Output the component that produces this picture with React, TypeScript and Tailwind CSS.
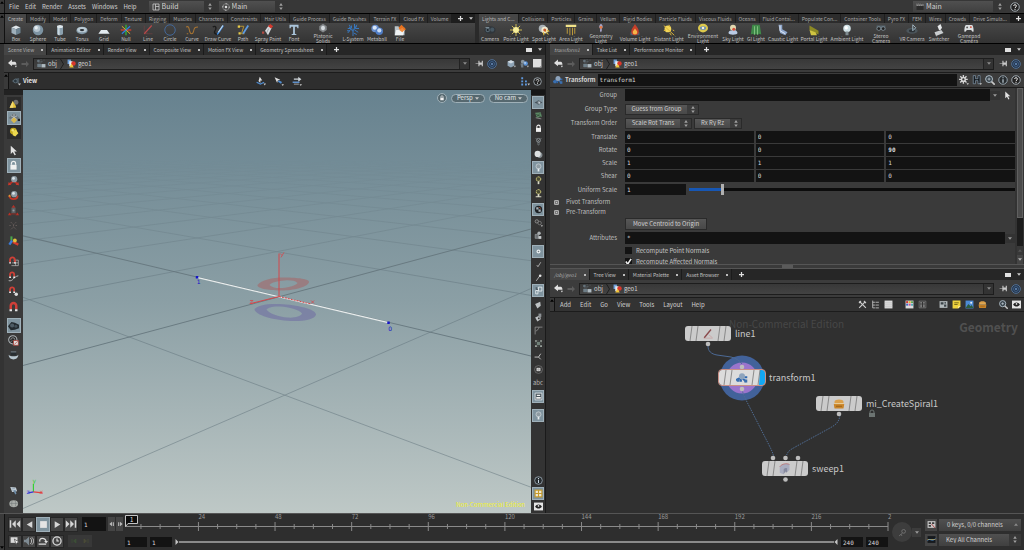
import type { ReactNode } from "react"

const ICONS: Record<string, ReactNode> = {
    box: (
        <>
            <path d="M2 4.5 8 2l6 2.5L8 7z" fill="#dfe6ea" />
            <path d="M2 4.5 8 7v7.5L2 12z" fill="#9fb0bb" />
            <path d="M14 4.5 8 7v7.5l6-2.5z" fill="#6d8391" />
        </>
    ),
    sphere: (
        <>
            <circle cx="8" cy="8" r="7" fill="#7d93a2" />
            <circle cx="6.5" cy="6" r="4.500" fill="#b3c2cc" />
            <circle cx="5.6" cy="5" r="2.200" fill="#e6edf1" />
        </>
    ),
    tube: (
        <>
            <path d="M4 3.5v9.5c0 1 1.8 2 4 2s4-1 4-2V3.5z" fill="#8ba0ae" />
            <path d="M5 4v10.200q1.500.8 2.500.8V4z" fill="#c8d5dd" />
            <ellipse cx="8" cy="3.200" rx="4" ry="2" fill="#dfe8ee" />
        </>
    ),
    torus: (
        <>
            <ellipse cx="8" cy="8.500" rx="7.500" ry="5" fill="#8297a5" />
            <ellipse cx="8" cy="7.500" rx="6.500" ry="3.500" fill="#bccbd5" />
            <ellipse cx="8" cy="8" rx="3" ry="1.500" fill="#2c3135" />
        </>
    ),
    grid: <path d="M4 8h8l3.500 5H.5z" fill="#e3eaef" />,
    null: (
        <>
            <path d="M8 1v14" stroke="#2fbf3a" strokeWidth="1.600" />
            <path d="M1 8h14" stroke="#e8402c" strokeWidth="1.600" />
            <path d="M2.500 3 13.500 13" stroke="#e3b52a" strokeWidth="1.300" />
            <path d="M13.500 3 2.500 13" stroke="#2f7fe0" strokeWidth="1.600" />
        </>
    ),
    line: (
        <>
            <path d="M3 2v11h11M3 13l5-1" fill="none" stroke="#6a4040" />
            <path d="M3 13 13 2" stroke="#b8494a" strokeWidth="1.500" />
        </>
    ),
    lineNode: (
        <>
            <path d="M2 13.500h12M9 9l5 4" fill="none" stroke="#c9a3a3" />
            <path d="M3 13 12 2" stroke="#8a4a4c" strokeWidth="1.800" />
        </>
    ),
    circle: <circle cx="8" cy="8" r="7" fill="none" stroke="#44699a" strokeWidth="1.300" />,
    curve: (
        <path
            d="M0 4c4-2 4 2 5 6s4 4 5 0 1-6 6-6M1 13h2"
            fill="none"
            stroke="#a87432"
            strokeWidth="1.400"
        />
    ),
    drawCurve: (
        <>
            <path d="M1 4c5-3 5 2 3 5s1 6 6 4" fill="none" stroke="#1c1c1c" strokeWidth="1.800" />
            <path d="M7 14 15 2" stroke="#3f8be0" strokeWidth="2" />
            <path d="M8.500 11 14.500 2" stroke="#c9dae6" strokeWidth="1.500" />
        </>
    ),
    path: (
        <>
            <path d="M2 3h7L6 13h4" fill="none" stroke="#b99430" strokeWidth="1.300" />
            <path d="M8 13 15 2" stroke="#5f9be0" strokeWidth="2.400" />
            <path d="M1 2h3v3H1zM2 11h3v3H2z" fill="#e8cc4a" />
        </>
    ),
    spray: (
        <>
            <path d="M4 9 9 2l4 3-5 10z" fill="#d8dcdf" />
            <path d="m8 3 3-3 4 3-3 3z" fill="#d2382d" />
            <path d="M0 10h3v3H0z" fill="#b14a42" />
            <path d="M6 12l3-6" stroke="#8d9498" />
        </>
    ),
    font: (
        <path
            d="M2 1h12v4.500h-1.500L12 3.500H9.200v9.500l2 .5v1H4.800v-1l2-.5V3.500H4l-.5 2H2z"
            fill="#aac4da"
        />
    ),
    platonic: (
        <>
            <path d="M8 1l6 4v6l-6 4-6-4V5z" fill="#83878a" />
            <path d="M8 4l3 2v4l-3 2-3-2V6z" fill="#d5dade" />
        </>
    ),
    lsystem: (
        <path
            d="M8 16V6M8 10 3 4M8 9l5-6M5 6H1M4 9H0M11 6h5M10 8l5 3M6 2v4M10 0v6M5 7 1 12M9 12l4 2M3 1l2 4M13 1l-2 4"
            fill="none"
            stroke="#3878c0"
            strokeWidth="1.300"
        />
    ),
    metaball: (
        <>
            <circle cx="5.500" cy="6" r="5" fill="#6a8fcc" />
            <circle cx="11" cy="9.500" r="5" fill="#4f7cc4" />
            <circle cx="5" cy="5" r="2.800" fill="#d9e6f6" />
            <circle cx="11" cy="8.500" r="2.800" fill="#c9dbf3" />
        </>
    ),
    file: (
        <>
            <path d="M1 3h5l1 2h7v10H1z" fill="#b9c3c9" />
            <path d="M6 5l4-4 6 6-6 4z" fill="#e6711f" />
            <path d="M3 8h11l-2 7H1z" fill="#eef2f4" />
            <path d="M7 8l4-3 3 3-3 3z" fill="#ef8a3c" />
        </>
    ),
    camera: (
        <>
            <ellipse cx="8" cy="8" rx="7.500" ry="5" fill="#30363b" />
            <circle cx="5" cy="8" r="3" fill="#53636e" />
            <circle cx="11" cy="7.500" r="2.800" fill="#465661" />
            <circle cx="5" cy="8" r="1.300" fill="#1c2227" />
            <path d="M2 4h5v1.500H2z" fill="#7b8b95" />
        </>
    ),
    pointLight: (
        <>
            <path
                d="M8 0v16M0 8h16M2.500 2.500l11 11M13.500 2.500l-11 11"
                stroke="#e6cf55"
                strokeWidth="1.100"
            />
            <circle cx="8" cy="8" r="4" fill="#f8ef9a" />
        </>
    ),
    spotLight: (
        <>
            <circle cx="6" cy="6" r="5" fill="#a9b1b6" />
            <circle cx="9" cy="8" r="4.500" fill="#efe9cf" />
            <path d="M9 9l5 5M12 8l3 2M7 11l1 4" stroke="#e0bd3c" strokeWidth="1.400" />
            <circle cx="9" cy="8" r="2" fill="#c85a2c" />
        </>
    ),
    areaLight: (
        <>
            <path d="M1 1h14v3H1z" fill="#f1e38a" />
            <path d="M3 5v8M6.500 5v10M10 5v10M13 5v8" stroke="#c8a33a" strokeWidth="1.200" />
        </>
    ),
    geoLight: (
        <>
            <path d="M8 1c4 3 3 6 1 8 1 2 0 4-1 6-2-2-2-4-1-6-3-2-2-6 1-8z" fill="#a7a4c8" />
            <circle cx="8" cy="7" r="2.200" fill="#e57a44" />
        </>
    ),
    volumeLight: (
        <>
            <path d="M2 11h12v4H2z" fill="#4b6275" />
            <path d="M8 0c1 3 5 5 5 10a5 5 0 0 1-10 0c0-4 3-6 5-10z" fill="#c7402b" />
            <path d="M8 6c1 2 3 3 3 5a3 3 0 0 1-6 0c0-2 2-3 3-5z" fill="#f5b54a" />
        </>
    ),
    distantLight: (
        <>
            <circle cx="6.500" cy="6.500" r="4.500" fill="#f2d65a" />
            <path d="M1 2l14 13M8 1l1 3M1 9l3-1M9 12l2 3M13 8l2 1" stroke="#d9b438" strokeWidth="1.300" />
        </>
    ),
    envLight: (
        <>
            <ellipse cx="8" cy="8" rx="8" ry="7" fill="#ddca4c" />
            <ellipse cx="8" cy="8" rx="5" ry="3" fill="#6d8fb6" />
            <circle cx="8" cy="8" r="2" fill="#f6f2d4" />
        </>
    ),
    skyLight: (
        <>
            <circle cx="8" cy="5" r="4" fill="#e3d9b0" />
            <path d="M2 12c0-3 3-4 4-3 2-3 8-1 8 3 0 3-12 3-12 0z" fill="#b9cbe4" />
            <circle cx="9" cy="7" r="2" fill="#d5503a" />
        </>
    ),
    giLight: (
        <>
            <path d="M3 1h10l2 13-3-1-2 2-2-2-2 2-2-2-3 1z" fill="#3f8a49" />
            <path d="M6 3v11M10 3v11" stroke="#7fbf80" strokeWidth="1.300" />
        </>
    ),
    caustic: (
        <>
            <path d="M2 1h5v6l7 4-3 4-7-3z" fill="#8ea6ca" />
            <path d="M4 2v7l7 4" fill="none" stroke="#e3ebf7" strokeWidth="1.300" />
        </>
    ),
    portal: (
        <>
            <path d="M2 2l12 7v5L2 8z" fill="#8d8a24" />
            <path d="M2 8l8 3 2 4H4z" fill="#cfc441" />
        </>
    ),
    bulb: (
        <>
            <circle cx="8" cy="6" r="5" fill="#cfe0e4" />
            <circle cx="7" cy="5" r="2.300" fill="#fff" />
            <path d="M6 10h4v5H6z" fill="#7f8c91" />
        </>
    ),
    stereo: (
        <>
            <path d="M1 4h14v7H1z" fill="#56646d" />
            <circle cx="4.500" cy="9" r="3" fill="#222" stroke="#97a6b0" />
            <circle cx="11.500" cy="9" r="3" fill="#222" stroke="#97a6b0" />
        </>
    ),
    vr: (
        <>
            <ellipse cx="8" cy="9" rx="7.500" ry="4" fill="#4c565c" />
            <ellipse cx="8" cy="9" rx="4" ry="2" fill="#2b3135" />
            <path d="M9 1v8l4-4z" stroke="#9fb4c0" fill="none" strokeWidth="1.300" />
        </>
    ),
    switcher: (
        <>
            <path d="M2 11l9-3 3 4-10 4z" fill="#c9cdcf" />
            <path d="M8 8 6 3l4-3 2 5-2 3" fill="#e6e8e9" />
        </>
    ),
    gamepad: (
        <>
            <path d="M3 3h10c2 1 3 10 2 11s-3-3-4-3H5c-1 0-3 4-4 3S1 4 3 3z" fill="#dcdfe1" />
            <circle cx="5" cy="7" r="1.500" fill="#555" />
            <circle cx="11" cy="6.500" r="1.500" fill="#d2452e" />
        </>
    ),
    back: (
        <>
            <path d="M0 7l7-6v4h4c4 0 4 4 4 5H7v3z" fill="#e0e0e0" />
            <path d="M12 12h4l-2 3z" fill="#e0e0e0" />
        </>
    ),
    forward: <path d="M16 8 10 2v4H1v4h9v4z" fill="#5c5c5c" />,
    obj: (
        <>
            <path d="M1 2h3v3H1zM6 4h4M1 9h6v5H1z" fill="#6f7e88" stroke="#6f7e88" />
            <path d="M8 9h7v6H8z" fill="#aebac1" />
            <path d="M2 6h8M11 2h3M5 1h3" stroke="#66737c" strokeDasharray="1 1" />
        </>
    ),
    geo: (
        <>
            <path d="M1 1h6v8H1z" fill="#6f9fd8" />
            <path d="M4 4h6v9H4z" fill="#e8edf2" />
            <circle cx="11.500" cy="8" r="4" fill="#d9372c" />
            <path d="M4 15 8 8l4 7z" fill="#f0c33a" />
        </>
    ),
    pin: <path d="M1 7.500h5V3h2v3h4V3h2v10h-2v-3H8v3H6V8.500H1z" fill="#c9c9c9" />,
    target: (
        <>
            <circle cx="8" cy="8" r="7" fill="#26364a" stroke="#587aa4" strokeWidth="1.300" />
            <circle cx="8" cy="8" r="4" fill="none" stroke="#45699a" strokeWidth="1.200" />
            <circle cx="8" cy="8" r="1.500" fill="#6f97c8" />
        </>
    ),
    cube: (
        <>
            <path d="M1 5 7 2l6 3v7l-6 3-6-3z" fill="#8fa4b6" />
            <path d="M1 5l6 3 6-3-6-3z" fill="#d3dce4" />
            <path d="M12 12h4l-2 3z" fill="#bbb" />
        </>
    ),
    people: (
        <>
            <circle cx="5" cy="5" r="3.500" fill="#8a949b" />
            <circle cx="10" cy="8" r="4" fill="#5d93d6" />
            <path d="M1 8h5v7H2z" fill="#717c84" />
            <circle cx="9" cy="7" r="1.500" fill="#c9dcf2" />
            <path d="M12 12h4l-2 3z" fill="#bbb" />
        </>
    ),
    square: (
        <>
            <path d="M0 0h15v15H0z" fill="#dedede" />
            <path d="M12 13h4l-2 3z" fill="#888" />
        </>
    ),
    viewCam: (
        <>
            <path d="M1 8l5-3v6zM7 4l6-1v9l-6-1z" fill="#4a565e" />
            <circle cx="7" cy="8" r="3" fill="#2b363e" stroke="#6c7d88" />
            <path d="M11 12h5l-2.500 3z" fill="#ccc" />
        </>
    ),
    pickA: (
        <>
            <path d="M6 1l4 6H7v4L4 8z" fill="#dedede" />
            <path d="M1 10l6 3 6-3" fill="none" stroke="#4e8bd0" strokeWidth="2" />
            <path d="M12 12h4l-2 3z" fill="#ccc" />
        </>
    ),
    pickB: (
        <>
            <path d="M1 2l9 4-4 1-1 4z" fill="#dedede" />
            <path d="M7 8l5 3" stroke="#4e8bd0" strokeWidth="3" />
            <path d="M12 13h4l-2 3z" fill="#ccc" />
        </>
    ),
    pickC: (
        <>
            <path d="M3 4h7V1l5 4-5 4V6H3z" fill="#cdd3d8" />
            <path d="M1 10h11" stroke="#5e8fc9" strokeWidth="2.400" />
            <path d="M3 13h8" stroke="#aaa" strokeWidth="1.500" />
            <path d="M12 13h4l-2 3z" fill="#ccc" />
        </>
    ),
    layout: (
        <>
            <path d="M2 2h3v3H2zM2 7h3v3H2zM2 12h3v3H2zM8 7h3v3H8zM8 12h3v3H8z" fill="#5e97dc" />
            <path d="M12 12h4l-2 3z" fill="#ccc" />
        </>
    ),
    help: (
        <>
            <circle cx="8" cy="8" r="6.800" fill="#222" stroke="#b9c4cc" strokeWidth="1.300" />
            <path
                d="M5.800 6.300C5.800 3.500 10.300 3.700 10.300 6.300 10.300 8 8 8 8 9.800M8 11v1.700"
                fill="none"
                stroke="#e8e8e8"
                strokeWidth="1.600"
            />
        </>
    ),
    info: (
        <>
            <circle cx="8" cy="8" r="6.800" fill="#262b2e" stroke="#a9b8c4" strokeWidth="1.300" />
            <path d="M8 3.500v1.700M8 6.800v5.700" stroke="#c9d6e0" strokeWidth="1.800" />
        </>
    ),
    gear: (
        <>
            <path d="M7 0v14M0 7h14M2 2l10 10M12 2 2 12" stroke="#d6d6d6" strokeWidth="2.200" />
            <circle cx="7" cy="7" r="4" fill="#d6d6d6" />
            <circle cx="7" cy="7" r="1.800" fill="#333" />
            <path d="M12 13h4l-2 3z" fill="#ccc" />
        </>
    ),
    hscript: (
        <>
            <path d="M2 1h3.500v5h4V1H13v13H9.500V9h-4v5H2z" fill="#151a1e" stroke="#8fa6bd" />
            <path d="M12 13h4l-2 3z" fill="#ccc" />
        </>
    ),
    zoom: (
        <>
            <circle cx="6.500" cy="6.500" r="5.500" fill="#37424a" stroke="#b4c2cc" strokeWidth="1.600" />
            <path d="M10.500 10.500l5 5" stroke="#c9c9c9" strokeWidth="2.600" />
            <path d="M4 6.500h5M6.500 4v5" stroke="#dbe6ee" />
        </>
    ),
    arrow: <path d="M4 1v12l3-3 2.500 5 2-1L9 9.500h4z" fill="#e2e2e2" />,
    objMode: (
        <>
            <circle cx="11" cy="5" r="4" fill="#6e6e6e" />
            <path d="M1 14 6 3l5 8v3z" fill="#e6c53a" />
            <path d="M1 14 6 3l1 11z" fill="#f2da74" />
        </>
    ),
    compMode: (
        <>
            <path d="M8 1l7 7-7 4-7-4z" fill="#6c757a" />
            <path d="M8 2v9M4 5l8 5M12 5l-8 5" stroke="#c5ccd0" />
            <path d="M8 7l4 4-4 4-4-4z" fill="#d8b84c" />
            <path d="M13 9h3v3h-3z" fill="#222" />
        </>
    ),
    dynMode: (
        <>
            <circle cx="7" cy="6.500" r="5.500" fill="#c4aa1e" />
            <path d="M6 7l5-3 4 6-5 5-4-2z" fill="#ecd94f" />
            <circle cx="6" cy="5" r="2" fill="#f0e27c" />
        </>
    ),
    lock: (
        <>
            <path d="M5 7V5a3 3 0 0 1 6 0v2" fill="none" stroke="#f0f0f0" strokeWidth="1.800" />
            <path d="M3.500 7h9v7h-9z" fill="#f0f0f0" />
        </>
    ),
    move: (
        <>
            <path d="M8 9 2 13M9 9l5 4" stroke="#b93126" strokeWidth="2.600" fill="none" />
            <path d="M0 15l1-5 4 4zM16 15l-5-1 4-4z" fill="#c9382b" />
            <circle cx="9" cy="6" r="4.500" fill="#8d9ba4" />
            <circle cx="8" cy="5" r="2" fill="#dbe3e8" />
        </>
    ),
    rotate: (
        <>
            <path d="M2 8c0 7 12 7 12 0" stroke="#c23527" strokeWidth="2.600" fill="none" />
            <circle cx="9" cy="6" r="4.500" fill="#8d9ba4" />
            <circle cx="8" cy="5" r="2" fill="#dbe3e8" />
            <path d="M0 9l3-3 1 4z" fill="#dc9c36" />
        </>
    ),
    scaleTool: (
        <>
            <path d="M8 0l3 4H5zM0 15l2-4 3 4zM16 15l-2-4-3 4z" fill="#b93126" />
            <path d="M5 4h6v8H5z" fill="#5c6164" />
            <path d="M3 13h10" stroke="#8b3028" strokeWidth="1.500" />
            <circle cx="8" cy="8" r="1.500" fill="#92999d" />
        </>
    ),
    pose: (
        <path d="M4 3l4 4 4-4M8 7v3l-4 4M8 10l4 4M2 8h3M11 8h3" stroke="#6a605d" strokeWidth="1.300" strokeDasharray="2 1" fill="none" />
    ),
    handles: (
        <>
            <path d="M5 8V2" stroke="#4aa84a" strokeWidth="3" />
            <path d="M6 8l-4 6" stroke="#3c7bd6" strokeWidth="3.400" />
            <path d="M7 10l8 4" stroke="#d33a2d" strokeWidth="3.400" />
            <circle cx="10" cy="8" r="2.800" fill="#e2c13c" />
        </>
    ),
    magnetGrid: (
        <>
            <path d="M8 6h7v8H5M6 10h9M11 6v8" stroke="#bdbdbd" fill="none" />
            <path d="M3 9V5.500a3.500 3.500 0 0 1 7 0V9" stroke="#cf4037" strokeWidth="2.600" fill="none" />
            <path d="M1.700 9h2.600v2H1.700zM8.700 9h2.600v2H8.700z" fill="#eee" />
        </>
    ),
    magnetCurve: (
        <>
            <path d="M1 14c6 2 7-6 14-7" stroke="#bdbdbd" strokeWidth="1.300" fill="none" />
            <path d="M3 8V5a3 3 0 0 1 6 0v3" stroke="#cf4037" strokeWidth="2.600" fill="none" />
            <path d="M1.700 8h2.600v2H1.700zM7.700 8h2.600v2H7.700z" fill="#eee" />
        </>
    ),
    magnetPoint: (
        <>
            <path d="M3 8V5a3 3 0 0 1 6 0v3" stroke="#cf4037" strokeWidth="2.600" fill="none" />
            <path d="M1.700 8h2.600v2H1.700zM7.700 8h2.600v2H7.700z" fill="#eee" />
            <circle cx="12" cy="12" r="2.500" fill="#ddd" />
        </>
    ),
    magnet: (
        <>
            <path d="M4 12V7a4 4 0 0 1 8 0v5" stroke="#cf3f38" strokeWidth="3.600" fill="none" />
            <path d="M2.200 12h3.600v3H2.200zM10.200 12h3.600v3h-3.600z" fill="#e6e6e6" />
        </>
    ),
    camDark: (
        <>
            <path d="M0 9l5-6 5 1 6 3v5l-6 2-6 1z" fill="#232a2f" />
            <circle cx="6" cy="8" r="3" fill="#4e5b64" />
            <circle cx="11.500" cy="9" r="2.200" fill="#414e57" />
        </>
    ),
    flip: (
        <>
            <circle cx="7" cy="7" r="6" fill="#2a2a2a" stroke="#aeb5b9" strokeWidth="1.500" />
            <path d="M4 7a3 3 0 0 1 6 0M4 10l2-2" stroke="#aeb5b9" fill="none" />
            <path d="M8 8h7v7H8z" fill="#ddd" stroke="#b03a30" />
            <path d="M9 14l5-5" stroke="#b03a30" />
        </>
    ),
    bowl: (
        <>
            <path d="M4 2h8v6H4z" fill="#272d31" />
            <path d="M4 2h8v1.500H4z" fill="#7b868d" />
            <path d="M1 7c0 9 14 9 14 0-2 3-12 3-14 0z" fill="#b7c6cf" />
        </>
    ),
    plane: (
        <>
            <path d="M8 4l7 4-7 4-7-4z" fill="#46525a" />
            <path d="M4.500 6l7 4M11.500 6l-7 4" stroke="#8c9aa2" />
            <path d="M8 5v6l4-2" fill="#c3cdd3" />
        </>
    ),
    planeGreen: (
        <>
            <path d="M2 3l10-1 2 8-9 2z" fill="#5b8763" />
            <path d="M4 6l8 4M5 10l6-6" stroke="#25382a" />
            <path d="M3 12l10 2" stroke="#bbb" />
        </>
    ),
    ghost: (
        <>
            <circle cx="8" cy="6" r="3.500" fill="none" stroke="#9aa2a6" strokeWidth="1.300" />
            <path d="M6 5l4 3M10 4 6 9M7 10h2v4H7zM3 2l2 2M13 2l-2 2" stroke="#9aa2a6" />
        </>
    ),
    spheres: (
        <>
            <circle cx="10" cy="9" r="5" fill="#868e92" />
            <circle cx="6.500" cy="7" r="5.500" fill="#dcdfe0" />
        </>
    ),
    bulbLight: (
        <>
            <circle cx="8" cy="6" r="4.500" fill="#8f9ca3" stroke="#dfe6e9" />
            <path d="M6.500 10h3v5h-3z" fill="#e8edef" />
        </>
    ),
    bulbYellow: (
        <>
            <circle cx="8" cy="5.500" r="4" fill="#4a4b32" stroke="#e3dd84" strokeWidth="1.600" strokeDasharray="3 1" />
            <path d="M6.500 9.500h3v5h-3z" fill="#d9d9c6" />
        </>
    ),
    bulbShadow: (
        <>
            <circle cx="8" cy="5" r="4" fill="#4a4b32" stroke="#e3dd84" strokeWidth="1.600" strokeDasharray="3 1" />
            <path d="M6.500 9h3v4h-3zM3 13h10v1.500H3z" fill="#d9d9c6" />
        </>
    ),
    checkBall: (
        <>
            <circle cx="8" cy="8" r="6.500" fill="#1d2226" />
            <path d="M4 4h4v4H4zM8 8h4v4H8z" fill="#a9b2b8" />
            <path d="M9 4l3 2" stroke="#c45b37" strokeWidth="1.500" />
        </>
    ),
    chain: (
        <>
            <circle cx="5" cy="6" r="3" fill="#3d3d3d" stroke="#9c9c9c" strokeWidth="1.300" />
            <circle cx="10" cy="9" r="3" fill="#2b2b2b" stroke="#8a8a8a" strokeWidth="1.300" />
            <path d="M12 13h4l-2 3z" fill="#bbb" />
        </>
    ),
    shapes: (
        <>
            <path d="M2 6h6v7H2z" fill="#6d7174" stroke="#a6abae" />
            <circle cx="9" cy="4" r="3" fill="#aaafb2" />
            <path d="M8 9h5v5H8z" fill="#c8ccce" />
        </>
    ),
    dot: (
        <>
            <circle cx="8" cy="8" r="3.500" fill="#e9eef0" />
            <circle cx="8" cy="8" r="1.400" fill="#6d7b82" />
        </>
    ),
    check: <path d="M5 9l2 3 5-8" stroke="#b8b8b8" strokeWidth="1.500" fill="none" />,
    brush: (
        <>
            <path d="M4 14l7-10" stroke="#b8b8b8" strokeWidth="1.600" />
            <circle cx="11" cy="5" r="2.300" fill="#e6e6e6" />
        </>
    ),
    notes: (
        <>
            <path d="M3 8h4v6H3zM8 2h6v7H8z" fill="none" stroke="#e8edf0" strokeWidth="1.500" />
            <path d="M4 2v4h3" stroke="#3b464c" strokeWidth="1.500" fill="none" />
        </>
    ),
    kite: <path d="M2 7l9-4 1 7-6 5z" fill="#bfc3c5" />,
    kiteBox: (
        <>
            <path d="M2 8l9-4 1 7-6 4z" fill="#bfc3c5" />
            <path d="M8 1h5v6H8z" fill="#8d9295" />
            <path d="M7 8h3v3H7z" fill="#333" />
        </>
    ),
    corner: <path d="M2 15V2h13M3 9c3-1 5-3 6-7" stroke="#9c9c9c" strokeWidth="1.300" fill="none" />,
    cluster: (
        <>
            <path d="M2 2h3v3H2zM11 2h3v3h-3zM2 11h3v3H2zM11 11h3v3h-3z" fill="#a6b0a9" />
            <path d="M5 5h6v6H5z" fill="#6f7f77" />
            <path d="M3 6v4M13 6v4M6 3h4M6 13h4" stroke="#7d8781" strokeDasharray="1 1" />
        </>
    ),
    tri: <path d="M1 9h7l4-6M8 9l4 4" stroke="#d4d4d4" strokeWidth="1.500" fill="none" />,
    tile: (
        <>
            <circle cx="8" cy="8" r="7" fill="none" stroke="#8a8a8a" />
            <path d="M4.500 5h7v6h-7z" fill="#d0d0d0" />
            <path d="M8 5v6M4.500 8h7" stroke="#999" strokeWidth=".7" />
        </>
    ),
    frame: (
        <>
            <path d="M2 2h12v12H2z" fill="#48545b" stroke="#e4eaed" strokeWidth="1.500" />
            <path d="M5 5h6v2H5zM4 9h8v3H4z" fill="#f0f0f0" />
        </>
    ),
    quad: (
        <>
            <path d="M1 1h14v14H1z" fill="#c79b2a" />
            <path d="M3 3h4v4H3zM9 3h4v4H9zM3 9h4v4H3zM9 9h4v4H9z" fill="#efe9d6" />
        </>
    ),
    eye: (
        <>
            <path d="M0 1h16v14H0z" fill="#e4e4e4" />
            <path d="M2 8c3-5 9-5 12 0-3 5-9 5-12 0z" fill="#222" />
            <circle cx="8" cy="7" r="1.500" fill="#e4e4e4" />
        </>
    ),
    dropper: (
        <>
            <path d="M2 3l9 1 2 6-8 1z" fill="#c7d2d9" />
            <path d="M4 5l6 1M5 8l6 1" stroke="#7f94a6" />
            <path d="M7 9l3 6 2-1-2-6z" fill="#6e8ca8" />
        </>
    ),
    globe: (
        <>
            <ellipse cx="7.500" cy="7.500" rx="7" ry="5.500" fill="#a9ada9" />
            <path d="M1 7h13M5 3c-1 3-1 6 0 9M10 3c1 3 1 6 0 9" stroke="#6b7070" fill="none" strokeWidth=".8" />
        </>
    ),
    transform: (
        <>
            <path d="M0 11l5-3M6 9l1 4M9 9l5 4M11 7h4" stroke="#2f68b0" strokeWidth="2.600" />
            <circle cx="8" cy="5.500" r="4" fill="#8ea4bd" />
            <path d="M1 9h4v4H1zM11 10h4v4h-4z" fill="#3b6fae" />
        </>
    ),
    tools: (
        <>
            <path d="M3 3l11 11" stroke="#cfcfcf" strokeWidth="2" />
            <path d="M13 3 2 14" stroke="#cfcfcf" strokeWidth="2" />
            <path d="M1 4l3-3 2 2-3 3zM11 1l4 4-2 1-3-3z" fill="#cfcfcf" />
        </>
    ),
    tree: <path d="M3 1v13h4M3 4h4M3 9h4M8 4h6M8 9h6M8 14h6" stroke="#c4c4c4" strokeWidth="1.500" fill="none" />,
    sheet: (
        <>
            <path d="M1 1h14v14H1z" fill="#dcdcdc" />
            <path d="M1 5h14M1 8.500h14M1 12h14" stroke="#b5b5b5" strokeWidth=".8" />
        </>
    ),
    palette: (
        <>
            <path d="M1 1h14v14H1z" fill="#ddd" />
            <path d="M2 2h3.500v3.500H2z" fill="#d0382c" />
            <path d="M6.500 2H10v3.500H6.500z" fill="#e2b62e" />
            <path d="M11 2h3v3.500h-3z" fill="#4b9a3f" />
            <path d="M2 6.500h3.500V10H2z" fill="#3a68c4" />
            <path d="M6.500 6.500H10V10H6.500z" fill="#c84f9a" />
            <path d="M11 6.500h3V10h-3z" fill="#3aa0b4" />
        </>
    ),
    dots: (
        <>
            <path d="M2 2h12v12H2z" fill="none" stroke="#8f8f8f" />
            <path d="M4 4h3v2H4zM9 4h3v2H9zM4 8h3v2H4zM9 8h3v2H9zM4 11h3v2H4zM9 11h3v2H9z" fill="#999" />
        </>
    ),
    checker: (
        <>
            <path d="M1 2h14v12H1z" fill="#b3babd" />
            <path d="M3 4h5v4H3zM9 8h4v4H9z" fill="#3a4247" />
            <circle cx="11" cy="5" r="1.500" fill="#3a4247" />
        </>
    ),
    sticky: (
        <>
            <path d="M1 1h14v10l-4 4H1z" fill="#efd33e" />
            <path d="M4 5h8M4 8h6" stroke="#54490f" strokeWidth="1.300" />
            <path d="M15 11l-4 4v-4z" fill="#fff3ae" />
        </>
    ),
    image: (
        <>
            <path d="M1 1h14v14H1z" fill="#4d8bd6" />
            <path d="M1 14l5-7 4 4 2-2 3 5z" fill="#2d5d3e" />
            <circle cx="11" cy="5" r="1.800" fill="#e9f0f6" />
        </>
    ),
    basket: (
        <>
            <path d="M2 5c0-4 12-4 12 0v2H2z" fill="#dba04a" />
            <path d="M1 8h14l-1 6H2z" fill="#c98428" />
            <path d="M2 7.500h12" stroke="#f7d38e" />
            <path d="M4 11h8" stroke="#8d5a17" />
        </>
    ),
    sweep: (
        <>
            <path d="M1 5c3-4 9-5 13-3v7l-3 3V7C8 6 6 7 6 9v6l-5-2z" fill="#a9adc0" />
            <path d="M6 9c0-2 2-3 5-2v5l-2 1v-2L6 15z" fill="#85899f" />
            <path d="M1 5c3-4 9-5 13-3" stroke="#b8686a" fill="none" />
        </>
    ),
    desktop: (
        <path d="M2 2h12v12H2zM7 2v12M7 7h7" fill="none" stroke="#c9c9c9" strokeWidth="1.600" />
    ),
    radial: (
        <>
            <circle cx="8" cy="8" r="6.500" fill="none" stroke="#b5b5b5" strokeWidth="1.300" strokeDasharray="7 3" />
            <circle cx="8" cy="8" r="2.500" fill="#e0e0e0" />
            <path d="M8 0v3M8 13v3M0 8h3M13 8h3" stroke="#e0e0e0" strokeWidth="1.500" />
        </>
    ),
    clapper: (
        <>
            <path d="M1 6h14v8H1z" fill="#2c2c2c" />
            <path d="M1 1l14 1v4H1z" fill="#8a8a8a" />
            <path d="M3 1l2 4M7 1l2 4M11 1l2 4" stroke="#222" />
        </>
    ),
    first: <path d="M1 3h2v10H1zM9 3v10L4 8zM15 3v10l-5-5z" fill="#d6d6d6" />,
    last: <path d="M13 3h2v10h-2zM7 3v10l5-5zM1 3v10l5-5z" fill="#d6d6d6" />,
    playBack: <path d="M13 2v12L3 8z" fill="#d6d6d6" />,
    play: <path d="M3 2v12l10-6z" fill="#d6d6d6" />,
    stop: <path d="M2 2h12v12H2z" fill="#e4e4e4" />,
    stepBack: <path d="M8 2v12L1 8zM10 3h3v10h-3z" fill="#b8b8b8" />,
    stepFwd: <path d="M8 2v12l7-6zM3 3h3v10H3z" fill="#b8b8b8" />,
    realtime: (
        <>
            <path d="M1 2h11v9H1z" fill="#d9d9d9" />
            <path d="M7 5l8 5-4 1-1 4z" fill="#f4f4f4" stroke="#333" />
        </>
    ),
    audio: (
        <>
            <path d="M0 6h3l5-5v14l-5-5H0z" fill="#7f8b93" />
            <path d="M10 3c3 3 3 7 0 10M12.500 2c4 4 4 8 0 12" stroke="#d4d4d4" fill="none" strokeWidth="1.300" />
        </>
    ),
    loop: (
        <>
            <path d="M3 9c-2-7 9-7 10 0M1 13h12" stroke="#dedede" strokeWidth="2" fill="none" />
            <path d="M10 8h6l-3 4z" fill="#dedede" />
        </>
    ),
    clock: (
        <>
            <circle cx="8" cy="8" r="6.500" fill="#444" stroke="#e0e0e0" strokeWidth="2" />
            <path d="M8 4v4h3" stroke="#e8e8e8" strokeWidth="1.700" fill="none" />
        </>
    ),
    prevKey: <path d="M4 4v8M12 4v8L7 8z" fill="#3f4a3a" stroke="#3b5a32" />,
    nextKey: <path d="M12 4v8M4 4v8l5-4z" fill="#4a453c" stroke="#4c5533" />,
    key: (
        <>
            <circle cx="10" cy="6" r="3.300" fill="none" stroke="#777" strokeWidth="1.500" />
            <path d="M8 9l-6 5M5 11l2 3" stroke="#777" strokeWidth="1.500" />
        </>
    ),
    scope: (
        <>
            <path d="M1 2h14v12H1z" fill="#c8c8c8" />
            <path d="M3 4h4v3H3zM9 4h4v3H9zM3 9h4v3H3z" fill="#3b3b3b" />
            <path d="M8 7l6 7" stroke="#a33" strokeWidth="1.500" />
        </>
    ),
    channels: (
        <>
            <path d="M1 2h14v12H1z" fill="#15191d" />
            <path d="M1 8h14" stroke="#d9a83a" strokeWidth="1.500" />
            <path d="M1 10c4-6 8 4 14-4" stroke="#4f9be0" fill="none" strokeWidth="1.300" />
        </>
    ),
    plusBox: (
        <>
            <path d="M1 1h14v14H1z" fill="#e2e2e2" />
            <path d="M4 4h8v8H4z" fill="#2a2a2a" />
            <path d="M8 5v6M5 8h6" stroke="#e2e2e2" strokeWidth="2" />
        </>
    ),
}

const Icon = ({ name, className = "size-3" }: { name: string; className?: string }) => (
    <svg viewBox="0 0 16 16" className={`shrink-0 ${className}`} aria-hidden="true">
        {ICONS[name]}
    </svg>
)

const IconButton = ({
    name,
    size = "size-[12px]",
    className = "",
}: {
    name: string
    size?: string
    className?: string
}) => (
    <button aria-label={name} className={`flex shrink-0 items-center justify-center ${className}`}>
        <Icon name={name} className={size} />
    </button>
)

const Down = ({ className = "fill-[#c8c8c8]" }: { className?: string }) => (
    <svg viewBox="0 0 6 4" className={`h-[3px] w-[4px] shrink-0 ${className}`} aria-hidden="true">
        <path d="M0 0h6L3 4z" />
    </svg>
)

const UpDown = () => (
    <svg viewBox="0 0 4 8" className="h-[7px] w-[4px] shrink-0 fill-[#a0a0a0]" aria-hidden="true">
        <path d="M0 3h4L2 0zM0 5h4L2 8z" />
    </svg>
)

const Plus = () => (
    <svg viewBox="0 0 6 6" className="size-[5px] shrink-0" aria-hidden="true">
        <path d="M3 0v6M0 3h6" stroke="#e0e0e0" strokeWidth="1.500" />
    </svg>
)

const Handle = ({ down = false }: { down?: boolean }) => (
    <button
        aria-label="Collapse"
        className={`flex w-[5px] shrink-0 justify-center self-stretch border-r border-[#111] bg-[#3a3a3a] py-px ${
            down ? "items-end" : "items-start"
        }`}
    >
        <Down className={down ? "fill-black" : "rotate-180 fill-black"} />
    </button>
)

/* ---------- menu bar ---------- */

const MENUS = ["File", "Edit", "Render", "Assets", "Windows", "Help"]

const Desktop = ({ icon, label, width }: { icon: string; label: string; width: string }) => (
    <label className="flex h-[11px] items-center bg-linear-to-b from-[#505050] to-[#404040] text-[7px]">
        <span className={`flex items-center gap-0.5 pl-[3px] ${width}`}>
            <Icon name={icon} className="size-[8px]" />
            <select aria-label={label} className="grow appearance-none bg-transparent outline-none">
                <option>{label}</option>
            </select>
        </span>
        <span className="flex h-full w-[13px] items-center justify-center bg-[#363636]">
            <UpDown />
        </span>
    </label>
)

const MenuBar = () => (
    <header className="flex h-[14px] shrink-0 items-center border-b border-black bg-[#373737] pr-1">
        <Handle />
        <nav className="ml-1 flex gap-[6px] text-[6px] text-[#d0d0d0]">
            {MENUS.map((menu) => (
                <button key={menu}>{menu}</button>
            ))}
        </nav>
        <div className="ml-3 flex gap-0.5">
            <Desktop icon="desktop" label="Build" width="w-[55px]" />
            <Desktop icon="radial" label="Main" width="w-[56px]" />
        </div>
        <div className="ml-auto flex items-center gap-1">
            <Desktop icon="clapper" label="Main" width="w-[80px]" />
            <IconButton name="help" size="size-[10px]" />
        </div>
    </header>
)

/* ---------- shelves ---------- */

interface Tool {
    label: string
    icon: string
    width: string
    tall?: boolean
}

const LEFT_SHELF = [
    "Create", "Modify", "Model", "Polygon", "Deform", "Texture", "Rigging", "Muscles",
    "Characters", "Constraints", "Hair Utils", "Guide Process", "Guide Brushes",
    "Terrain FX", "Cloud FX", "Volume",
]

const RIGHT_SHELF = [
    "Lights and C...", "Collisions", "Particles", "Grains", "Vellum", "Rigid Bodies",
    "Particle Fluids", "Viscous Fluids", "Oceans", "Fluid Contai...", "Populate Con...",
    "Container Tools", "Pyro FX", "FEM", "Wires", "Crowds", "Drive Simula...",
]

const LEFT_TOOLS: Tool[] = [
    { label: "Box", icon: "box", width: "w-[22px]" },
    { label: "Sphere", icon: "sphere", width: "w-[22px]" },
    { label: "Tube", icon: "tube", width: "w-[22px]" },
    { label: "Torus", icon: "torus", width: "w-[22px]" },
    { label: "Grid", icon: "grid", width: "w-[22px]" },
    { label: "Null", icon: "null", width: "w-[22px]" },
    { label: "Line", icon: "line", width: "w-[22px]" },
    { label: "Circle", icon: "circle", width: "w-[22px]" },
    { label: "Curve", icon: "curve", width: "w-[22px]" },
    { label: "Draw Curve", icon: "drawCurve", width: "w-[30px]" },
    { label: "Path", icon: "path", width: "w-[20px]" },
    { label: "Spray Paint", icon: "spray", width: "w-[30px]" },
    { label: "Font", icon: "font", width: "w-[22px]" },
    { label: "Platonic Solids", icon: "platonic", width: "w-[36px]", tall: true },
    { label: "L-System", icon: "lsystem", width: "w-[24px]" },
    { label: "Metaball", icon: "metaball", width: "w-[24px]" },
    { label: "File", icon: "file", width: "w-[22px]" },
]

const RIGHT_TOOLS: Tool[] = [
    { label: "Camera", icon: "camera", width: "w-[22px]" },
    { label: "Point Light", icon: "pointLight", width: "w-[30px]" },
    { label: "Spot Light", icon: "spotLight", width: "w-[26px]" },
    { label: "Area Light", icon: "areaLight", width: "w-[28px]" },
    { label: "Geometry Light", icon: "geoLight", width: "w-[32px]", tall: true },
    { label: "Volume Light", icon: "volumeLight", width: "w-[36px]" },
    { label: "Distant Light", icon: "distantLight", width: "w-[32px]" },
    { label: "Environment Light", icon: "envLight", width: "w-[36px]", tall: true },
    { label: "Sky Light", icon: "skyLight", width: "w-[24px]" },
    { label: "GI Light", icon: "giLight", width: "w-[22px]" },
    { label: "Caustic Light", icon: "caustic", width: "w-[32px]" },
    { label: "Portal Light", icon: "portal", width: "w-[30px]" },
    { label: "Ambient Light", icon: "bulb", width: "w-[36px]" },
    { label: "Stereo Camera", icon: "stereo", width: "w-[32px]", tall: true },
    { label: "VR Camera", icon: "vr", width: "w-[30px]" },
    { label: "Switcher", icon: "switcher", width: "w-[24px]" },
    { label: "Gamepad Camera", icon: "gamepad", width: "w-[36px]", tall: true },
]

const Shelf = ({ tabs, tools }: { tabs: string[]; tools: Tool[] }) => (
    <section className="min-w-0 grow bg-[#1e1e1e]">
        <div className="flex h-[9px] items-stretch gap-px text-[5px] text-[#ababab]">
            {tabs.map((tab, i) => (
                <button
                    key={tab}
                    className={`shrink-0 px-[3px] leading-[9px] whitespace-nowrap ${
                        i === 0 ? "bg-[#464646] text-[#bdbdbd]" : "bg-[#2c2c2c]"
                    }`}
                >
                    {tab}
                </button>
            ))}
            <button aria-label="Add shelf" className="flex w-4 shrink-0 items-center justify-center">
                <Plus />
            </button>
            <button aria-label="Shelf menu" className="ml-auto flex items-center pr-1">
                <Down />
            </button>
        </div>
        <div className="flex h-[20px] bg-linear-to-b from-[#464646] to-[#333333]">
            {tools.map((tool) => (
                <button
                    key={tool.label}
                    className={`flex shrink-0 flex-col items-center text-[5px] text-[#c2c2c2] ${
                        tool.tall ? "" : "pt-px"
                    } ${tool.width}`}
                >
                    <Icon name={tool.icon} className={tool.tall ? "size-[10px]" : "size-[12px]"} />
                    <span className={tool.tall ? "px-1 leading-[5px]" : "leading-[6px] whitespace-nowrap"}>
                        {tool.label}
                    </span>
                </button>
            ))}
        </div>
    </section>
)

/* ---------- pane chrome ---------- */

const PaneTabs = ({ tabs, italicFirst = false }: { tabs: string[]; italicFirst?: boolean }) => (
    <div className="flex h-[11px] shrink-0 items-stretch bg-[#262626] text-[5px] text-[#c2c2c2]">
        {tabs.map((tab, i) => (
            <button
                key={tab}
                className={`flex shrink-0 items-center gap-[7px] border-r border-[#1b1b1b] pr-[3px] pl-1 whitespace-nowrap ${
                    i === 0 ? "bg-[#454545] text-[#b0b0b0]" : "bg-[#2c2c2c]"
                } ${i === 0 && italicFirst ? "italic" : ""}`}
            >
                {tab}
                <span className="size-[2px] bg-[#bdbdbd]" />
            </button>
        ))}
        <button aria-label="Add tab" className="flex w-5 items-center justify-center">
            <Plus />
        </button>
        <div className="ml-auto flex items-center gap-1.5 pr-[3px]">
            <button aria-label="Maximize" className="h-[4px] w-[6px] bg-[#e0e0e0]" />
            <button aria-label="Pane menu" className="flex items-center">
                <Down />
            </button>
        </div>
    </div>
)

const PathBar = ({ children }: { children?: ReactNode }) => (
    <div className="flex h-[18px] shrink-0 items-center border-b border-[#1c1c1c] bg-[#3c3c3c] pr-[3px] pl-[3px] text-[6px] text-[#d0d0d0]">
        <IconButton name="back" size="size-[9px]" className="w-[10px]" />
        <IconButton name="forward" size="size-[8px]" className="ml-[3px] w-[10px]" />
        <div className="ml-[3px] flex h-[12px] grow items-center border border-[#1d1d1d] bg-linear-to-b from-[#383838] to-[#434343] pl-[3px]">
            <Icon name="obj" className="size-[9px]" />
            <button className="ml-0.5">obj</button>
            <svg viewBox="0 0 4 10" className="mx-[3px] h-[10px] w-[4px]" aria-hidden="true">
                <path d="M.5 0l3 5-3 5" fill="none" stroke="#1e1e1e" />
            </svg>
            <Icon name="geo" className="size-[9px]" />
            <button className="ml-0.5">geo1</button>
            <button
                aria-label="Path history"
                className="ml-auto flex h-full w-[10px] items-center justify-center border-l border-[#222] bg-[#333]"
            >
                <Down className="fill-[#8a8a8a]" />
            </button>
        </div>
        <IconButton name="pin" size="size-[9px]" className="ml-[5px]" />
        <IconButton name="target" size="size-[10px]" className="ml-[3px]" />
        {children}
    </div>
)

/* ---------- scene view ---------- */

interface BarItem {
    icon: string
    on?: boolean
    gap?: string
}

const LEFT_BAR: BarItem[] = [
    { icon: "arrow", gap: "mt-1" },
    { icon: "lock", on: true },
    { icon: "move" },
    { icon: "rotate" },
    { icon: "scaleTool" },
    { icon: "pose" },
    { icon: "handles" },
    { icon: "magnetGrid", gap: "mt-1.5" },
    { icon: "magnetCurve" },
    { icon: "magnetPoint" },
    { icon: "magnet" },
    { icon: "camDark", on: true, gap: "mt-1" },
    { icon: "flip" },
    { icon: "bowl" },
]

const RIGHT_BAR: BarItem[] = [
    { icon: "plane", on: true, gap: "mt-px" },
    { icon: "planeGreen" },
    { icon: "lock" },
    { icon: "ghost" },
    { icon: "spheres" },
    { icon: "bulbLight", on: true },
    { icon: "bulbYellow" },
    { icon: "bulbShadow" },
    { icon: "checkBall", on: true, gap: "mt-[3px]" },
    { icon: "chain" },
    { icon: "shapes" },
    { icon: "dot", on: true, gap: "mt-[3px]" },
    { icon: "check" },
    { icon: "brush" },
    { icon: "notes", on: true },
    { icon: "kite", gap: "mt-px" },
    { icon: "kiteBox" },
    { icon: "corner" },
    { icon: "cluster" },
    { icon: "tri" },
    { icon: "tile" },
    { icon: "abc" },
    { icon: "frame", on: true, gap: "mt-px" },
    { icon: "bulbLight", on: true, gap: "mt-1.5" },
]

const LIT = "border border-[#9fb0b9] bg-[#7f939e]"

const GRID_STEPS = Array.from({ length: 24 }, (_, i) => i - 1).filter((k) => k !== 0)

const PILL =
    "flex h-[9px] items-center gap-0.5 rounded-full border border-[#9fb0b8] bg-[#56686f] px-[5px]"

const Viewport = () => (
    <div className="relative min-w-0 grow">
        <svg
            viewBox="0 0 508 422"
            preserveAspectRatio="xMidYMid slice"
            className="absolute inset-0 size-full"
            role="img"
            aria-label="Perspective view"
        >
            <defs>
                <linearGradient id="sky" x1="0" y1="0" x2="0" y2="1">
                    <stop offset="0" stopColor="#67828f" />
                    <stop offset=".5" stopColor="#8b9fa5" />
                    <stop offset="1" stopColor="#bec8c6" />
                </linearGradient>
                <linearGradient id="fade" x1="0" y1="0" x2="0" y2="1">
                    <stop offset=".16" stopColor="#000" />
                    <stop offset=".28" stopColor="#666" />
                    <stop offset=".48" stopColor="#fff" />
                </linearGradient>
                <mask id="haze" maskUnits="userSpaceOnUse" x="0" y="0" width="508" height="422">
                    <rect width="508" height="422" fill="url(#fade)" />
                </mask>
            </defs>
            <rect width="508" height="422" fill="url(#sky)" />
            <g mask="url(#haze)" stroke="#5f7179" strokeWidth=".8" opacity=".6">
                {GRID_STEPS.map((k) => (
                    <line key={`x${k}`} x1={-440} y1={42} x2={560} y2={42 + 1000 / (4.244 + 1.57 * k)} />
                ))}
                {GRID_STEPS.map((k) => (
                    <line key={`z${k}`} x1={868} y1={42} x2={-32} y2={42 + 900 / (3.73 + 1.42 * k)} />
                ))}
            </g>
            <g stroke="#66777e" strokeWidth="1" opacity=".9">
                <path d="M0 145.400 510 266M0 275 510 138" />
            </g>
            <path
                d="M234.500 194.500c4-5 14-7.500 27-7.500s25 1.500 24.500 4.500c-1 5-16 8.500-27 8.500s-25-1.500-24.500-5.500zm12 0c2 2.500 7 3.500 13 3 7-.5 13-2.500 15-5-2-2.500-8-3-13-2.500-7 .5-13 2-15 4.500z"
                fill="#9d7678"
                fillRule="evenodd"
                opacity=".8"
            />
            <path
                d="M231.500 219c2-4 12-6 25-5.500 18 1 36 5 36.500 10.500-1 5-13 7-25 6.500-19-1-35-6-36.500-11.500zm12 0c3 4 12 7.500 21 8 7 .5 13-1 14.500-4-3-4-13-6.500-22-7-7-.5-12 1-13.500 3z"
                fill="#787ca4"
                fillRule="evenodd"
                opacity=".8"
            />
            <path d="M174 187 365 232" stroke="#e8ecec" strokeWidth="1.200" />
            <path d="M256 206V163M256 206l-28 7" stroke="#d4484c" fill="none" />
            <path d="M256 206l32 7.500" stroke="#d4484c" strokeDasharray="2 1" />
            <path d="M257 163l2 2M261 162l-3 5M227 210h3l-3 3h3M288 210l3 3M291 210l-3 3" stroke="#d4484c" fill="none" strokeWidth=".8" />
            <path d="M173 185.500h2.500v2.500H173zM364 231h2.500v2.500H364z" fill="#1414c8" />
            <path d="M11 401v-8" stroke="#34d034" strokeWidth="1.200" />
            <path d="M11 401l9 1" stroke="#e04040" strokeWidth="1.200" />
            <path d="M11 401l-5 1" stroke="#3434d8" strokeWidth="1.200" />
            <g fontSize="6" fontFamily="DejaVu Sans, sans-serif">
                <text x="174" y="194" fill="#1414c8">1</text>
                <text x="365" y="240" fill="#1414c8">0</text>
                <text x="10" y="392" fill="#34d034">y</text>
                <text x="17" y="403" fill="#e04040">x</text>
                <text x="4" y="403" fill="#3434d8">z</text>
            </g>
        </svg>
        <div className="absolute top-[3px] right-[3px] flex items-center gap-1 text-[6px] text-[#e2e8ea]">
            <button
                aria-label="Lock camera"
                className="flex size-[10px] items-center justify-center rounded-full border border-[#9fb0b8] bg-[#56686f]"
            >
                <Icon name="lock" className="size-[6px]" />
            </button>
            <button className={PILL}>
                Persp <Down />
            </button>
            <button className={PILL}>
                No cam <Down />
            </button>
        </div>
        <p className="absolute right-[6px] bottom-[4px] text-[6px] leading-[8px] text-[#f2f230]">
            Non-Commercial Edition
        </p>
    </div>
)

const SceneView = () => (
    <section className="flex min-w-0 flex-col border-r border-[#1a1a1a] bg-[#333] pl-[4px]">
        <PaneTabs
            tabs={[
                "Scene View",
                "Animation Editor",
                "Render View",
                "Composite View",
                "Motion FX View",
                "Geometry Spreadsheet",
            ]}
        />
        <PathBar>
            <IconButton name="cube" size="size-[9px]" className="ml-2.5" />
            <IconButton name="people" size="size-[9px]" className="ml-1" />
            <IconButton name="square" size="size-[9px]" className="ml-1" />
        </PathBar>
        <div className="flex h-[17px] shrink-0 items-center border-b border-[#1c1c1c] bg-[#2e2e2e] pr-[3px] text-[6px]">
            <Handle />
            <IconButton name="viewCam" size="size-[10px]" className="ml-0.5" />
            <span className="ml-[2px] font-bold text-[#e2e2e2]">View</span>
            <div className="flex grow items-center justify-center gap-2">
                <IconButton name="pickA" size="size-[10px]" />
                <IconButton name="pickB" size="size-[10px]" />
                <IconButton name="pickC" size="size-[10px]" />
            </div>
            <IconButton name="layout" size="size-[10px]" />
            <IconButton name="help" size="size-[9px]" className="ml-[3px]" />
        </div>
        <div className="flex min-h-0 grow">
            <div className="flex w-[19px] shrink-0 flex-col items-center bg-[#3a3a3a]">
                <div className="mb-0.5 h-[5px] w-full bg-[#222]" />
                <IconButton name="objMode" size="size-[10px]" className="h-[14px] w-[14px] bg-[#2b2b2b]" />
                <IconButton name="compMode" className={`h-[14px] w-[14px] ${LIT}`} />
                <IconButton name="dynMode" size="size-[10px]" className="h-[14px] w-[14px] bg-[#2b2b2b]" />
                {LEFT_BAR.map((item) => (
                    <IconButton
                        key={item.icon}
                        name={item.icon}
                        size="size-[11px]"
                        className={`h-[15px] w-[14px] ${item.gap ?? ""} ${item.on ? LIT : ""}`}
                    />
                ))}
                <IconButton name="dropper" size="size-[10px]" className="mt-auto h-[14px]" />
                <IconButton name="globe" size="size-[10px]" className="mb-0.5 h-[14px]" />
            </div>
            <Viewport />
            <div className="flex w-[14px] shrink-0 flex-col items-center bg-[#333]">
                <div className="h-[5px] w-full bg-[#161616]" />
                {RIGHT_BAR.map((item, i) =>
                    item.icon === "abc" ? (
                        <button key={i} className="h-[13px] text-[6px] leading-[13px] text-[#b5b5b5]">
                            abc
                        </button>
                    ) : (
                        <IconButton
                            key={i}
                            name={item.icon}
                            size="size-[9px]"
                            className={`h-[13px] w-[12px] ${item.gap ?? ""} ${item.on ? LIT : ""}`}
                        />
                    ),
                )}
                <IconButton name="info" size="size-[9px]" className="mt-auto h-[13px]" />
                <IconButton name="quad" size="size-[9px]" className={`h-[13px] w-[12px] ${LIT}`} />
                <IconButton name="eye" size="size-[9px]" className="h-[13px]" />
            </div>
        </div>
    </section>
)

/* ---------- parameters ---------- */

const MONO = "bg-[#131313] px-0.5 font-['DejaVu_Sans_Mono',monospace] text-[6px] text-[#d8d8d8] outline-none"

const FIELD = `h-[12px] min-w-0 grow leading-[12px] ${MONO}`

const Row = ({
    label,
    htmlFor,
    height = "h-[13px]",
    children,
}: {
    label?: string
    htmlFor?: string
    height?: string
    children: ReactNode
}) => (
    <div className={`flex items-center ${height}`}>
        <label htmlFor={htmlFor} className="mr-2 w-[67px] shrink-0 text-right text-[#bebebe]">
            {label}
        </label>
        {children}
    </div>
)

const Dropdown = ({ label, value, width }: { label: string; value: string; width: string }) => (
    <span className="mr-0.5 flex h-[11px] items-center border border-[#2a2a2a] bg-linear-to-b from-[#575757] to-[#484848]">
        <select
            aria-label={label}
            className={`appearance-none bg-transparent text-center text-[#d0d0d0] outline-none ${width}`}
        >
            <option>{value}</option>
        </select>
        <span className="flex h-full w-[11px] items-center justify-center bg-[#3c3c3c]">
            <UpDown />
        </span>
    </span>
)

const VECTORS = [
    { label: "Translate", values: ["0", "0", "0"] },
    { label: "Rotate", values: ["0", "0", "90"] },
    { label: "Scale", values: ["1", "1", "1"] },
    { label: "Shear", values: ["0", "0", "0"] },
]

const Check = ({ id, label, checked }: { id: string; label: string; checked?: boolean }) => (
    <div className="ml-[75px] flex h-[11px] items-center">
        <span className="relative mr-1 size-[7px]">
            <input
                id={id}
                type="checkbox"
                defaultChecked={checked}
                className="peer absolute inset-0 appearance-none bg-[#131313]"
            />
            <svg
                viewBox="0 0 8 8"
                className="pointer-events-none absolute inset-0 hidden size-full peer-checked:block"
                aria-hidden="true"
            >
                <path d="M1 4l2 3 4-6" stroke="#f0f0f0" strokeWidth="1.800" fill="none" />
            </svg>
        </span>
        <label htmlFor={id} className="text-[#c4c4c4]">
            {label}
        </label>
    </div>
)

const Parameters = () => (
    <section className="flex h-[220px] shrink-0 flex-col">
        <PaneTabs italicFirst tabs={["transform1", "Take List", "Performance Monitor"]} />
        <PathBar />
        <div className="flex h-[15px] shrink-0 items-center gap-[2px] border-b border-[#1c1c1c] bg-[#3c3c3c] pr-[3px] pl-[3px]">
            <Icon name="transform" className="size-[10px]" />
            <span className="text-[6px] font-bold text-[#d8d8d8]">Transform</span>
            <input aria-label="Node name" defaultValue="transform1" className={FIELD} />
            <IconButton name="gear" size="size-[10px]" />
            <IconButton name="hscript" size="size-[10px]" className="ml-px" />
            <IconButton name="zoom" size="size-[10px]" className="ml-px" />
            <IconButton name="info" size="size-[10px]" className="ml-px" />
            <IconButton name="help" size="size-[10px]" className="ml-px" />
        </div>
        <div className="flex min-h-0 grow bg-[#3a3a3a] text-[6px]">
            <div className="min-w-0 grow overflow-hidden">
                <Row label="Group" htmlFor="group" height="h-[14px]">
                    <input id="group" className={FIELD} />
                    <button aria-label="Group list" className="flex h-[9px] w-[10px] items-center justify-center bg-[#333]">
                        <Down className="fill-[#9a9a9a]" />
                    </button>
                    <IconButton name="arrow" size="size-[9px]" className="mx-[3px]" />
                </Row>
                <Row label="Group Type" height="h-[14px]">
                    <Dropdown label="Group Type" value="Guess from Group" width="w-[61px]" />
                </Row>
                <Row label="Transform Order" height="h-[14px]">
                    <Dropdown label="Transform Order" value="Scale Rot Trans" width="w-[54px]" />
                    <Dropdown label="Rotate Order" value="Rx Ry Rz" width="w-[35px]" />
                </Row>
                {VECTORS.map(({ label, values }) => (
                    <Row key={label} label={label} htmlFor={label}>
                        <div className="flex min-w-0 grow gap-0.5">
                            {values.map((value, i) => (
                                <input
                                    key={i}
                                    id={i === 0 ? label : undefined}
                                    aria-label={`${label} ${"xyz"[i]}`}
                                    defaultValue={value}
                                    className={`${FIELD} w-0 ${value === "90" ? "font-bold" : ""}`}
                                />
                            ))}
                        </div>
                    </Row>
                ))}
                <Row label="Uniform Scale" htmlFor="uniform" height="h-[15px]">
                    <input id="uniform" defaultValue="1" className={`h-[11px] w-[61px] shrink-0 ${MONO}`} />
                    <input
                        type="range"
                        aria-label="Uniform scale slider"
                        min="0"
                        max="10"
                        step="0.1"
                        defaultValue="1"
                        className="ml-[3px] h-[11px] min-w-0 grow appearance-none bg-transparent [&::-webkit-slider-runnable-track]:h-[3px] [&::-webkit-slider-runnable-track]:bg-[linear-gradient(to_right,#1757b4_10%,#0c0c0c_10%)] [&::-webkit-slider-thumb]:-mt-1 [&::-webkit-slider-thumb]:h-[11px] [&::-webkit-slider-thumb]:w-[3px] [&::-webkit-slider-thumb]:appearance-none [&::-webkit-slider-thumb]:bg-[#b0b0b0]"
                    />
                </Row>
                {["Pivot Transform", "Pre-Transform"].map((fold) => (
                    <button key={fold} className="flex h-[10px] w-full items-center gap-[7px] pl-1 text-[#bebebe]">
                        <Icon name="plusBox" className="size-[5px]" />
                        {fold}
                    </button>
                ))}
                <Row height="h-[14px]">
                    <button className="h-[12px] border border-[#2a2a2a] bg-linear-to-b from-[#575757] to-[#484848] px-[7px] leading-[10px] text-[#d0d0d0]">
                        Move Centroid to Origin
                    </button>
                </Row>
                <Row label="Attributes" htmlFor="attributes" height="h-[14px]">
                    <input id="attributes" defaultValue="*" className={FIELD} />
                    <button aria-label="Attribute list" className="flex h-[9px] w-[10px] items-center justify-center bg-[#333]">
                        <Down className="fill-[#9a9a9a]" />
                    </button>
                </Row>
                <Check id="pointNormals" label="Recompute Point Normals" />
                <Check id="affectedNormals" label="Recompute Affected Normals" checked />
            </div>
            <div className="flex w-[9px] shrink-0 flex-col items-center bg-[#333]">
                <div className="h-[130px] w-[6px] border border-[#606060] bg-[#4b4b4b]" />
                <div className="w-[6px] grow bg-[#1c1c1c]" />
                <button aria-label="Scroll up" className="flex h-[9px] w-[6px] items-center justify-center bg-[#383838]">
                    <Down className="rotate-180 fill-[#555]" />
                </button>
                <button aria-label="Scroll down" className="flex h-[9px] w-[6px] items-center justify-center bg-[#454545]">
                    <Down className="fill-[#b0b0b0]" />
                </button>
            </div>
        </div>
    </section>
)

/* ---------- network editor ---------- */

interface NodeData {
    name: string
    icon: string
    pos: string
    active?: boolean
}

const NODES: NodeData[] = [
    { name: "line1", icon: "lineNode", pos: "left-[135px] top-[14px]" },
    { name: "transform1", icon: "transform", pos: "left-[169px] top-[58px]", active: true },
    { name: "mi_CreateSpiral1", icon: "basket", pos: "left-[266px] top-[84px]" },
    { name: "sweep1", icon: "sweep", pos: "left-[212px] top-[149px]" },
]

const NetworkNode = ({ node }: { node: NodeData }) => (
    <button className={`absolute flex items-center gap-1 ${node.pos}`}>
        <span
            className={`flex h-[15px] w-[46px] items-center justify-between overflow-hidden rounded-[3px] ${
                node.active ? "bg-[#dcdcdc] outline outline-[#c98f86]" : "bg-[#cbcbcb]"
            }`}
        >
            <svg viewBox="0 0 14 15" className="h-full w-[14px]" aria-hidden="true">
                <path d="M7 0 5 15M13 0l-2 15" stroke="#777" strokeWidth=".8" />
            </svg>
            <Icon name={node.icon} className="size-[12px]" />
            <svg viewBox="0 0 14 15" className="h-full w-[14px]" aria-hidden="true">
                {node.active && <path d="M9 0h5v15H8z" fill="#12a8f4" />}
                <path d="M3 0 1 15M9 0 7 15" stroke="#777" strokeWidth=".8" />
            </svg>
        </span>
        <span className="text-[9px] leading-[14px] text-[#c8c8c8]">{node.name}</span>
    </button>
)

const NETWORK_MENUS = ["Add", "Edit", "Go", "View", "Tools", "Layout", "Help"]

const NetworkEditor = () => (
    <section className="flex min-h-0 grow flex-col">
        <PaneTabs italicFirst tabs={["/obj/geo1", "Tree View", "Material Palette", "Asset Browser"]} />
        <PathBar />
        <div className="flex h-[14px] shrink-0 items-center border-b border-[#1c1c1c] bg-[#333] pr-[3px] text-[6px] text-[#d0d0d0]">
            <Handle />
            <nav className="ml-[5px] flex gap-[9px]">
                {NETWORK_MENUS.map((menu) => (
                    <button key={menu}>{menu}</button>
                ))}
            </nav>
            <div className="ml-auto flex items-center gap-[4px]">
                <IconButton name="tools" size="size-[9px]" />
                <IconButton name="tree" size="size-[9px]" />
                <IconButton name="sheet" size="size-[9px]" />
                <IconButton name="palette" size="size-[9px]" className="ml-2" />
                <IconButton name="dots" size="size-[9px]" />
                <IconButton name="checker" size="size-[9px]" className="ml-2" />
                <IconButton name="sticky" size="size-[9px]" />
                <IconButton name="image" size="size-[9px]" />
                <IconButton name="basket" size="size-[9px]" />
                <IconButton name="zoom" size="size-[9px]" className="ml-2" />
                <IconButton name="eye" size="size-[9px]" />
            </div>
        </div>
        <div className="relative grow overflow-hidden bg-[#303030]">
            <span className="absolute top-[4px] left-[179px] text-[10px] leading-[16px] text-[#474747]">
                Non-Commercial Edition
            </span>
            <span className="absolute top-[6px] right-[6px] text-[12px] leading-[18px] font-bold text-[#505050]">
                Geometry
            </span>
            <svg className="absolute top-0 left-0 h-[200px] w-[474px]" viewBox="0 0 474 200" aria-hidden="true">
                <circle cx="192" cy="66" r="22.500" fill="#42629a" />
                <circle cx="192" cy="66" r="15.500" fill="#9a74cc" />
                <path d="M158 34c0 5 3 8 9 9l14 2c5 1 9 4 11 7" fill="none" stroke="#4c6a96" />
                <path
                    d="M192 77c1 5 2 7 4 11l23 45c3 6 4 8 5 13M290 103c-1 8-5 10-10 13l-33 18c-7 4-10 5-11 12"
                    fill="none"
                    stroke="#4f6c93"
                    strokeDasharray="1.500 1"
                />
                <g fill="#bdbdbd">
                    <circle cx="158" cy="32" r="2.300" />
                    <circle cx="192" cy="55" r="2.300" />
                    <circle cx="192" cy="77" r="2.300" />
                    <circle cx="289" cy="102" r="2.300" />
                    <circle cx="223" cy="146" r="2.300" />
                    <circle cx="235.500" cy="146" r="2.300" />
                    <circle cx="248" cy="146" r="2.300" />
                    <circle cx="235.500" cy="167.500" r="2.300" />
                </g>
                <path d="M320 101v-1a2 2 0 0 1 4 0v1" fill="none" stroke="#6c7472" />
                <path d="M319 101h6v4h-6z" fill="#6c7472" />
            </svg>
            {NODES.map((node) => (
                <NetworkNode key={node.name} node={node} />
            ))}
        </div>
    </section>
)

/* ---------- play bar ---------- */

const FRAMES = Array.from({ length: 40 }, (_, i) => (i + 1) * 6)

const at = (frame: number) => `${((frame - 1) / 239) * 100}%`

const Timeline = () => (
    <svg className="h-[18px] w-full overflow-visible" aria-label="Timeline">
        <line x1="0" x2="100%" y1="11.500" y2="11.500" stroke="#8a8a8a" />
        {FRAMES.map((frame) => (
            <line
                key={frame}
                x1={at(frame)}
                x2={at(frame)}
                y1={frame % 24 === 0 ? 7 : 9}
                y2={frame % 24 === 0 ? 16 : 14}
                stroke="#8a8a8a"
            />
        ))}
        {FRAMES.filter((frame) => frame % 24 === 0).map((frame) => (
            <text key={frame} x={at(frame)} y="4" fontSize="6" fill="#9a9a9a">
                {frame === 240 ? "2" : frame}
            </text>
        ))}
        <path d="M.5 11.500V.5h12v8H3z" fill="#0c0c0c" stroke="#c4c4c4" />
        <text x="5" y="7" fontSize="6" fill="#e6e6e6">
            1
        </text>
    </svg>
)

const FRAME_INPUT = `h-[10px] w-[22px] shrink-0 ${MONO}`

const PLAY = "h-[15px] w-[14px] border border-[#262626] bg-[#454545]"
const PLAY_OPTION = "h-[13px] w-[14px] border border-[#262626] bg-[#454545]"

const PlayBar = () => (
    <footer className="flex h-[37px] shrink-0 items-stretch border-t border-[#555] bg-[#2e2e2e]">
        <Handle down />
        <div className="ml-[3px] flex w-[114px] shrink-0 flex-col justify-center gap-[3px]">
            <div className="flex items-center">
                <IconButton name="first" className={PLAY} />
                <IconButton name="playBack" size="size-[9px]" className={PLAY} />
                <IconButton name="stop" size="size-[9px]" className={`h-[15px] w-[14px] ${LIT}`} />
                <IconButton name="play" size="size-[9px]" className={PLAY} />
                <IconButton name="last" className={PLAY} />
                <input
                    aria-label="Current frame"
                    defaultValue="1"
                    className={`ml-[4px] h-[14px] w-[24px] ${MONO}`}
                />
                <IconButton name="stepBack" size="size-[6px]" className="ml-0.5 h-[14px] w-[7px] bg-[#454545]" />
                <IconButton name="stepFwd" size="size-[6px]" className="ml-px h-[14px] w-[7px] bg-[#454545]" />
            </div>
            <div className="flex h-[13px] items-center">
                <IconButton name="realtime" size="size-[10px]" className={PLAY_OPTION} />
                <IconButton name="audio" size="size-[10px]" className={PLAY_OPTION} />
                <IconButton name="loop" size="size-[10px]" className={PLAY_OPTION} />
                <IconButton name="clock" size="size-[10px]" className={PLAY_OPTION} />
                <IconButton name="prevKey" size="size-[8px]" className="ml-1 h-[12px] w-[12px] bg-[#383838]" />
                <IconButton name="nextKey" size="size-[8px]" className="h-[12px] w-[12px] bg-[#383838]" />
            </div>
        </div>
        <div className="ml-[3px] flex min-w-0 grow flex-col pt-px">
            <Timeline />
            <div className="mt-[4px] flex h-[10px] items-center gap-[3px]">
                <input aria-label="Global start" defaultValue="1" className={FRAME_INPUT} />
                <input aria-label="Range start" defaultValue="1" className={FRAME_INPUT} />
                <div className="flex grow items-center">
                    <svg viewBox="0 0 4 8" className="h-[6px] w-[4px] fill-[#c4c4c4]" aria-hidden="true">
                        <path d="M0 0l4 4-4 4z" />
                    </svg>
                    <span className="h-[2px] grow bg-[#8a8a8a]" />
                    <svg viewBox="0 0 4 8" className="h-[6px] w-[4px] fill-[#c4c4c4]" aria-hidden="true">
                        <path d="M4 0 0 4l4 4z" />
                    </svg>
                </div>
                <input aria-label="Range end" defaultValue="240" className={FRAME_INPUT} />
                <input aria-label="Global end" defaultValue="240" className={FRAME_INPUT} />
            </div>
        </div>
        <div className="flex shrink-0 items-center pl-1 text-[6px] text-[#d0d0d0]">
            <button aria-label="Set key" className="flex size-[20px] items-center justify-center rounded-full bg-[#3d3d3d]">
                <Icon name="key" className="size-[9px]" />
            </button>
            <button aria-label="Key options" className="mr-0.5 flex size-[9px] items-center justify-center bg-[#3c3c3c]">
                <Down className="fill-[#9a9a9a]" />
            </button>
            <div className="ml-0.5 flex flex-col gap-[3px]">
                <IconButton name="scope" size="size-[9px]" className="size-[12px] bg-[#454545]" />
                <IconButton name="channels" size="size-[9px]" className="size-[12px] bg-[#454545]" />
            </div>
            <div className="mr-[3px] ml-0.5 flex w-[82px] flex-col gap-[3px]">
                <button className="flex h-[12px] items-center justify-between bg-linear-to-b from-[#505050] to-[#404040] pr-[3px] pl-2">
                    0 keys, 0/0 channels
                    <Down className="rotate-180 fill-[#8a8a8a]" />
                </button>
                <label className="flex h-[12px] items-center bg-linear-to-b from-[#505050] to-[#404040] pl-[7px]">
                    <select aria-label="Key scope" className="grow appearance-none bg-transparent outline-none">
                        <option>Key All Channels</option>
                    </select>
                    <span className="flex h-full w-[12px] items-center justify-center bg-[#383838]">
                        <UpDown />
                    </span>
                </label>
            </div>
        </div>
    </footer>
)

const App = () => (
    <div className="flex min-h-screen flex-col bg-[#2d2d2d] font-['Noto_Sans_CJK_SC',sans-serif] leading-none text-[#d0d0d0]">
        <MenuBar />
        <div className="grid h-[30px] shrink-0 grid-cols-[475fr_545fr] gap-[4px] border-b border-black bg-[#2a2a2a]">
            <div className="flex min-w-0">
                <Handle />
                <Shelf tabs={LEFT_SHELF} tools={LEFT_TOOLS} />
            </div>
            <Shelf tabs={RIGHT_SHELF} tools={RIGHT_TOOLS} />
        </div>
        <main className="grid grow grid-cols-[546fr_474fr] gap-[4px]">
            <SceneView />
            <div className="flex min-w-0 flex-col">
                <Parameters />
                <div className="flex h-[5px] shrink-0 items-center justify-center border-y border-[#555] bg-[#3a3a3a]">
                    <span className="h-[3px] w-[11px] bg-[#5a5a5a]" />
                </div>
                <NetworkEditor />
            </div>
        </main>
        <PlayBar />
    </div>
)

export default App
